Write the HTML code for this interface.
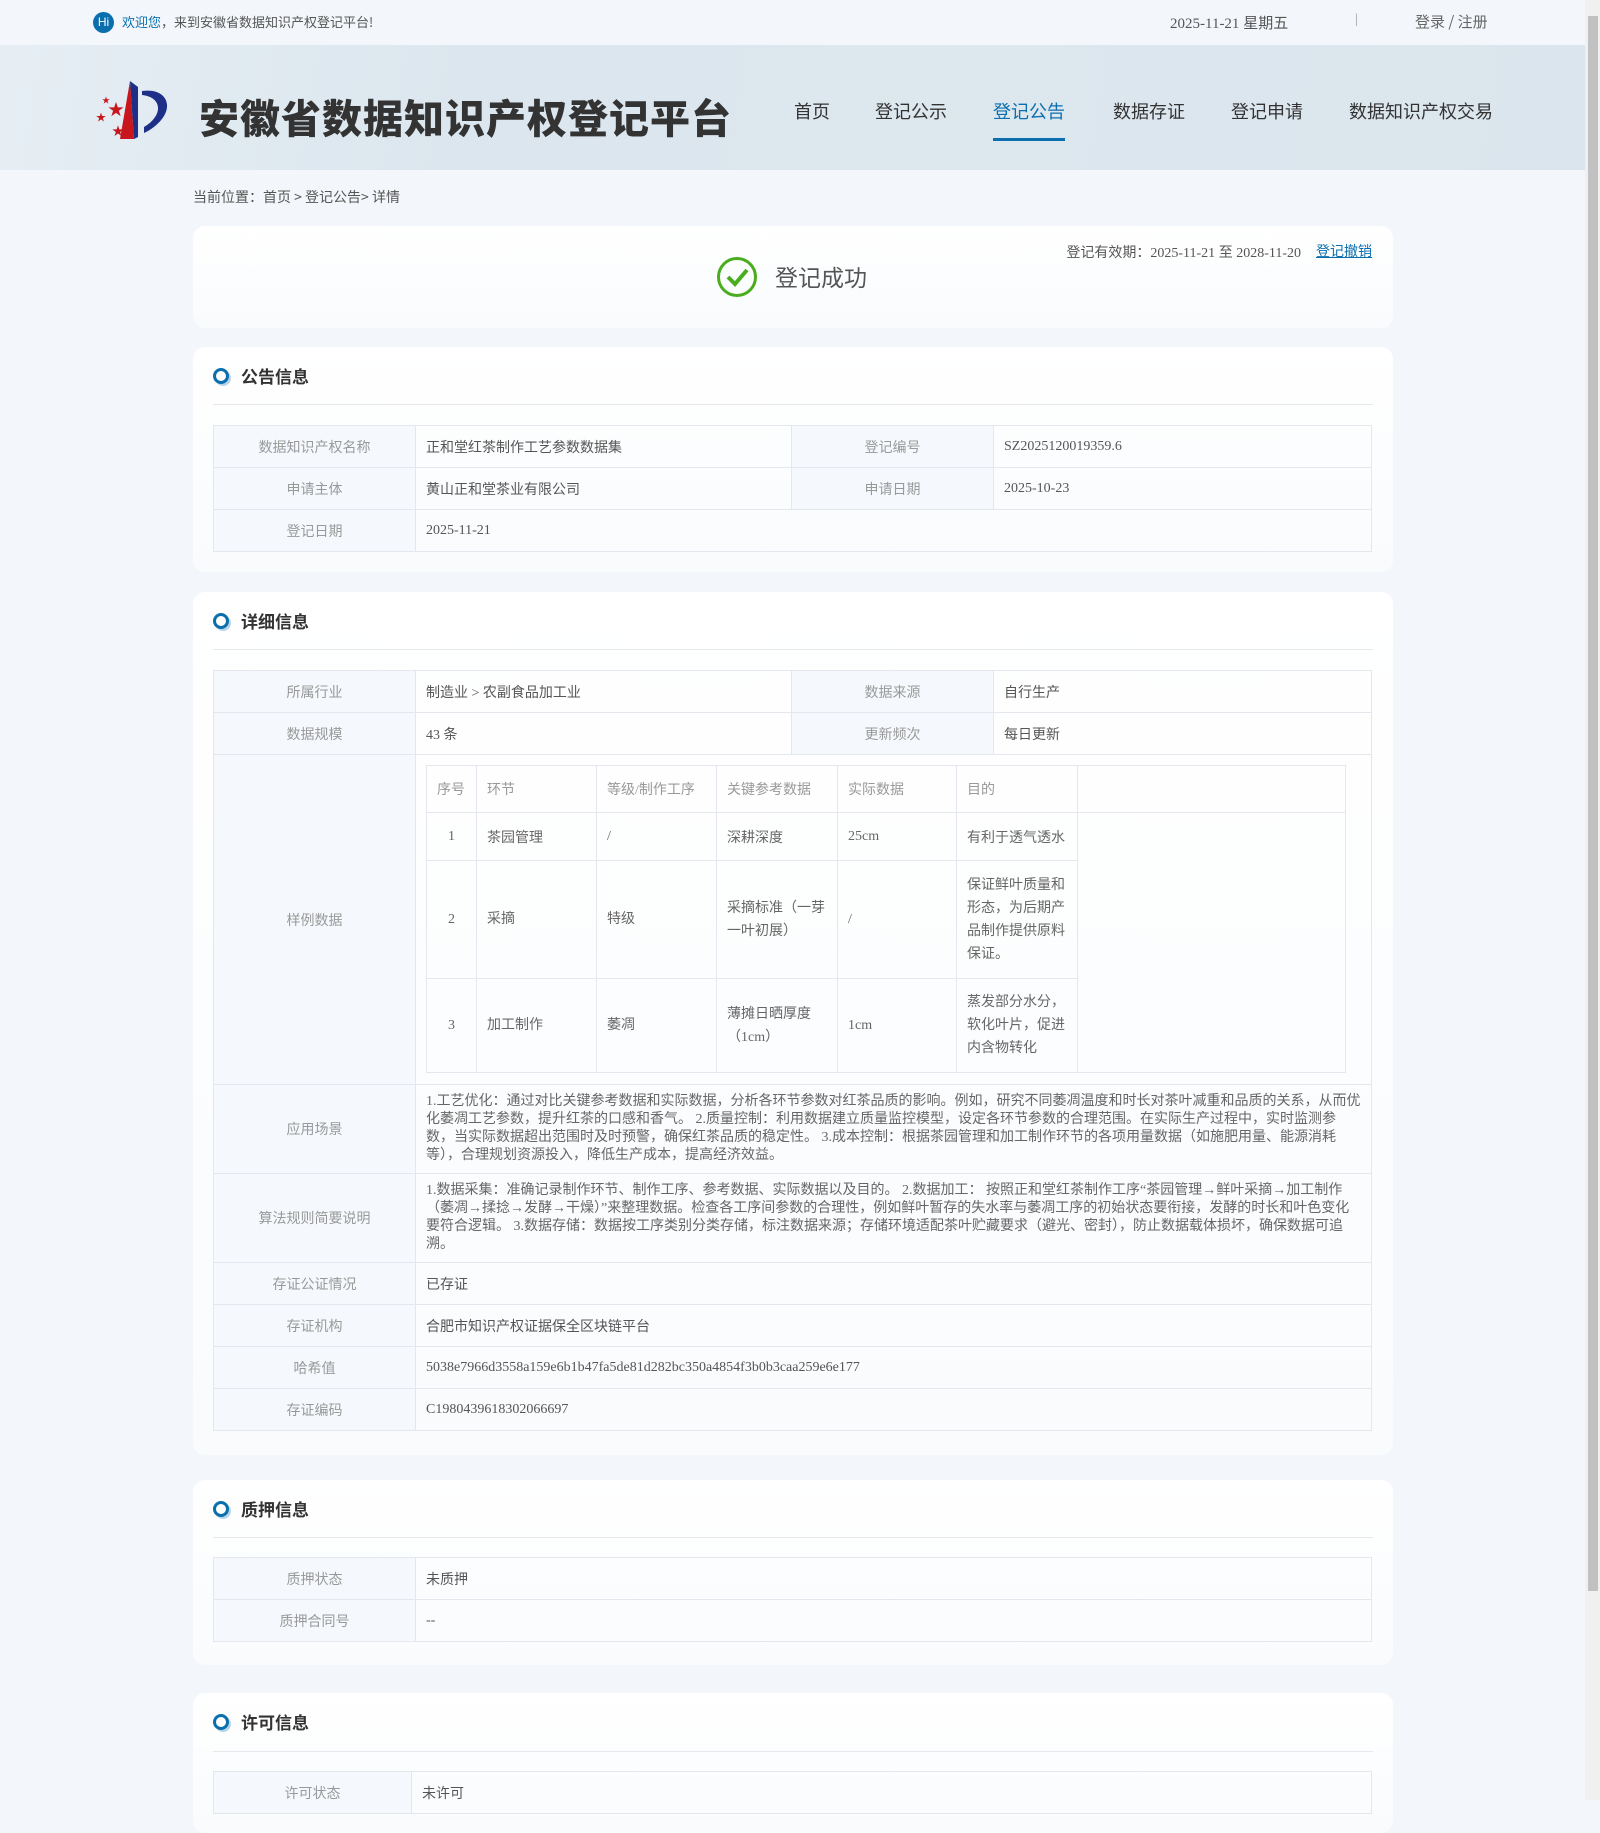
<!DOCTYPE html>
<html><head><meta charset="utf-8"><style>
*{box-sizing:border-box;margin:0;padding:0}
body{width:1600px;height:1800px;overflow:hidden;background:#f3f7fb;font-family:"Liberation Serif","Noto Sans CJK SC",sans-serif;color:#555;font-size:14px;position:relative}
.cjk{font-family:"Noto Sans CJK SC",sans-serif}
.top{position:absolute;left:0;top:0;width:1585px;height:45px;background:#f3f7fb}
.hdr{position:absolute;left:0;top:45px;width:1585px;height:125px;background:linear-gradient(100deg,#e6eef4 0%,#dbe6ee 30%,#dde7ee 60%,#dbe5ed 100%)}
.sb{position:absolute;right:0;top:0;width:15px;height:1800px;background:#f0f0f0}
.sb div{position:absolute;left:3px;top:16px;width:10px;height:1575px;background:#c1c1c1}
.nav{position:absolute;top:98px;font-size:18px;color:#333;font-family:"Noto Sans CJK SC",sans-serif}
.card{position:absolute;left:193px;width:1200px;background:linear-gradient(#fff,#f9fbfd);border-radius:12px}
.tt{position:absolute;left:48px;top:16px;font-size:17px;font-weight:bold;color:#333;font-family:"Noto Sans CJK SC",sans-serif}
.dot{position:absolute;left:20px;top:21px;width:16px;height:16px;border-radius:50%;border:3px solid #0b6fae;background:#fff;box-shadow:2px 2px 0 #b8d4e8}
.sep{position:absolute;left:20px;right:20px;height:1px;background:#e5e9ee}
table{border-collapse:collapse;position:absolute;left:20px;width:1159px;font-family:"Liberation Serif","Noto Sans CJK SC",sans-serif}
td{border:1px solid #e4e8ee;height:42px;padding:0 10px;font-size:14px;color:#555}
td.l{background:#f5f9fd;color:#999;text-align:center;width:202px}
td.p{line-height:18px;padding:8px 10px;color:#666}
.in{position:static;width:920px;margin:0}
.in td{height:auto;padding:0 10px;color:#666}
</style></head><body>
<div class="top">
 <div style="position:absolute;left:93px;top:12px;width:21px;height:21px;border-radius:50%;background:#0b6fae;color:#fff;font:12px 'Liberation Sans';line-height:21px;text-align:center">Hi</div>
 <div class="cjk" style="position:absolute;left:122px;top:12px;font-size:13px;color:#555"><span style="color:#0b6fae">欢迎您</span>，来到安徽省数据知识产权登记平台!</div>
 <div style="position:absolute;left:1170px;top:12px;font-size:15px;color:#555">2025-11-21 <span class="cjk">星期五</span></div>
 <div style="position:absolute;left:1355px;top:12px;color:#999">|</div>
 <div class="cjk" style="position:absolute;left:1415px;top:11px;font-size:15px;color:#666">登录 / 注册</div>
</div>
<div class="hdr">
 <svg style="position:absolute;left:90px;top:28px" width="90" height="70" viewBox="0 0 90 70">
  <path d="M30 66 L40 8 L44 66Z" fill="#c8161d"/><path d="M44 66 L40 8 L48 14 L48 64Z" fill="#1d2f87"/>
  <path d="M52 18 C80 14 88 40 58 58 L54 60 L54 54 C74 42 72 24 52 22Z" fill="#1d2f87"/>
  <text x="18" y="42" fill="#c8161d" font-size="16">★</text><text x="6" y="48" fill="#c8161d" font-size="10">★</text><text x="22" y="62" fill="#c8161d" font-size="12">★</text><text x="12" y="30" fill="#c8161d" font-size="8">★</text>
 </svg>
 <div class="cjk" style="position:absolute;left:199px;top:42px;font-size:40px;font-weight:900;color:#333;letter-spacing:1px">安徽省数据知识产权登记平台</div>
</div>
<div class="nav" style="left:794px">首页</div>
<div class="nav" style="left:875px">登记公示</div>
<div class="nav" style="left:993px;color:#0b6fae">登记公告</div>
<div style="position:absolute;left:993px;top:138px;width:72px;height:3px;background:#0b6fae"></div>
<div class="nav" style="left:1113px">数据存证</div>
<div class="nav" style="left:1231px">登记申请</div>
<div class="nav" style="left:1349px">数据知识产权交易</div>
<div class="cjk" style="position:absolute;left:193px;top:187px;font-size:14px;color:#555">当前位置：首页 &gt; 登记公告&gt; 详情</div>

<div class="card" style="top:226px;height:102px">
 <div style="position:absolute;left:524px;top:31px;width:40px;height:40px;border-radius:50%;border:3px solid #4aad1e"></div>
 <svg style="position:absolute;left:524px;top:31px" width="40" height="40"><path d="M11 20 L18 27 L30 13" stroke="#4aad1e" stroke-width="4" fill="none"/></svg>
 <div class="cjk" style="position:absolute;left:582px;top:33px;font-size:23px;color:#555">登记成功</div>
 <div style="position:absolute;right:92px;top:16px;font-size:14px;color:#555"><span class="cjk">登记有效期：</span>2025-11-21 <span class="cjk">至</span> 2028-11-20</div>
 <div class="cjk" style="position:absolute;left:1123px;top:15px;font-size:14px;color:#0b6fae;text-decoration:underline">登记撤销</div>
</div>

<div class="card" style="top:347px;height:225px">
 <div class="dot"></div><div class="tt">公告信息</div><div class="sep" style="top:57px"></div>
 <table style="top:78px"><tr><td class="l">数据知识产权名称</td><td style="width:376px">正和堂红茶制作工艺参数数据集</td><td class="l">登记编号</td><td>SZ2025120019359.6</td></tr>
 <tr><td class="l">申请主体</td><td>黄山正和堂茶业有限公司</td><td class="l">申请日期</td><td>2025-10-23</td></tr>
 <tr><td class="l">登记日期</td><td colspan="3">2025-11-21</td></tr></table>
</div>

<div class="card" style="top:592px;height:863px">
 <div class="dot"></div><div class="tt">详细信息</div><div class="sep" style="top:57px"></div>
 <table style="top:78px"><tr><td class="l">所属行业</td><td style="width:376px">制造业 &gt; 农副食品加工业</td><td class="l">数据来源</td><td>自行生产</td></tr>
 <tr><td class="l">数据规模</td><td>43 条</td><td class="l">更新频次</td><td>每日更新</td></tr>
 <tr><td class="l" style="height:330px">样例数据</td><td colspan="3" style="padding:10px 12px 10px 10px;vertical-align:top">
  <table class="in"><tr style="height:47px;color:#999"><td style="width:50px;color:#999">序号</td><td style="width:120px;color:#999">环节</td><td style="width:120px;color:#999">等级/制作工序</td><td style="width:121px;color:#999">关键参考数据</td><td style="width:119px;color:#999">实际数据</td><td style="width:121px;color:#999">目的</td><td></td></tr>
  <tr style="height:48px"><td style="text-align:center">1</td><td>茶园管理</td><td>/</td><td>深耕深度</td><td>25cm</td><td>有利于透气透水</td><td rowspan="3"></td></tr>
  <tr style="height:118px;line-height:23px"><td style="text-align:center">2</td><td>采摘</td><td>特级</td><td>采摘标准（一芽一叶初展）</td><td>/</td><td>保证鲜叶质量和形态，为后期产品制作提供原料保证。</td></tr>
  <tr style="height:94px;line-height:23px"><td style="text-align:center">3</td><td>加工制作</td><td>萎凋</td><td>薄摊日晒厚度（1cm）</td><td>1cm</td><td>蒸发部分水分，软化叶片，促进内含物转化</td></tr></table>
 </td></tr>
 <tr><td class="l" style="height:89px">应用场景</td><td colspan="3" class="p">1.工艺优化：通过对比关键参考数据和实际数据，分析各环节参数对红茶品质的影响。例如，研究不同萎凋温度和时长对茶叶减重和品质的关系，从而优化萎凋工艺参数，提升红茶的口感和香气。 2.质量控制：利用数据建立质量监控模型，设定各环节参数的合理范围。在实际生产过程中，实时监测参数，当实际数据超出范围时及时预警，确保红茶品质的稳定性。 3.成本控制：根据茶园管理和加工制作环节的各项用量数据（如施肥用量、能源消耗等），合理规划资源投入，降低生产成本，提高经济效益。</td></tr>
 <tr><td class="l" style="height:89px">算法规则简要说明</td><td colspan="3" class="p">1.数据采集：准确记录制作环节、制作工序、参考数据、实际数据以及目的。 2.数据加工： 按照正和堂红茶制作工序“茶园管理→鲜叶采摘→加工制作（萎凋→揉捻→发酵→干燥）”来整理数据。检查各工序间参数的合理性，例如鲜叶暂存的失水率与萎凋工序的初始状态要衔接，发酵的时长和叶色变化要符合逻辑。 3.数据存储：数据按工序类别分类存储，标注数据来源；存储环境适配茶叶贮藏要求（避光、密封），防止数据载体损坏，确保数据可追溯。</td></tr>
 <tr><td class="l">存证公证情况</td><td colspan="3">已存证</td></tr>
 <tr><td class="l">存证机构</td><td colspan="3">合肥市知识产权证据保全区块链平台</td></tr>
 <tr><td class="l">哈希值</td><td colspan="3">5038e7966d3558a159e6b1b47fa5de81d282bc350a4854f3b0b3caa259e6e177</td></tr>
 <tr><td class="l">存证编码</td><td colspan="3">C1980439618302066697</td></tr></table>
</div>

<div class="card" style="top:1480px;height:185px">
 <div class="dot"></div><div class="tt">质押信息</div><div class="sep" style="top:57px"></div>
 <table style="top:77px"><tr><td class="l" style="width:198px">质押状态</td><td>未质押</td></tr><tr><td class="l">质押合同号</td><td>--</td></tr></table>
</div>

<div class="card" style="top:1693px;height:140px">
 <div class="dot"></div><div class="tt">许可信息</div><div class="sep" style="top:58px"></div>
 <table style="top:78px"><tr><td class="l" style="width:198px">许可状态</td><td>未许可</td></tr></table>
</div>
<div class="sb"><div></div></div>
</body></html>
